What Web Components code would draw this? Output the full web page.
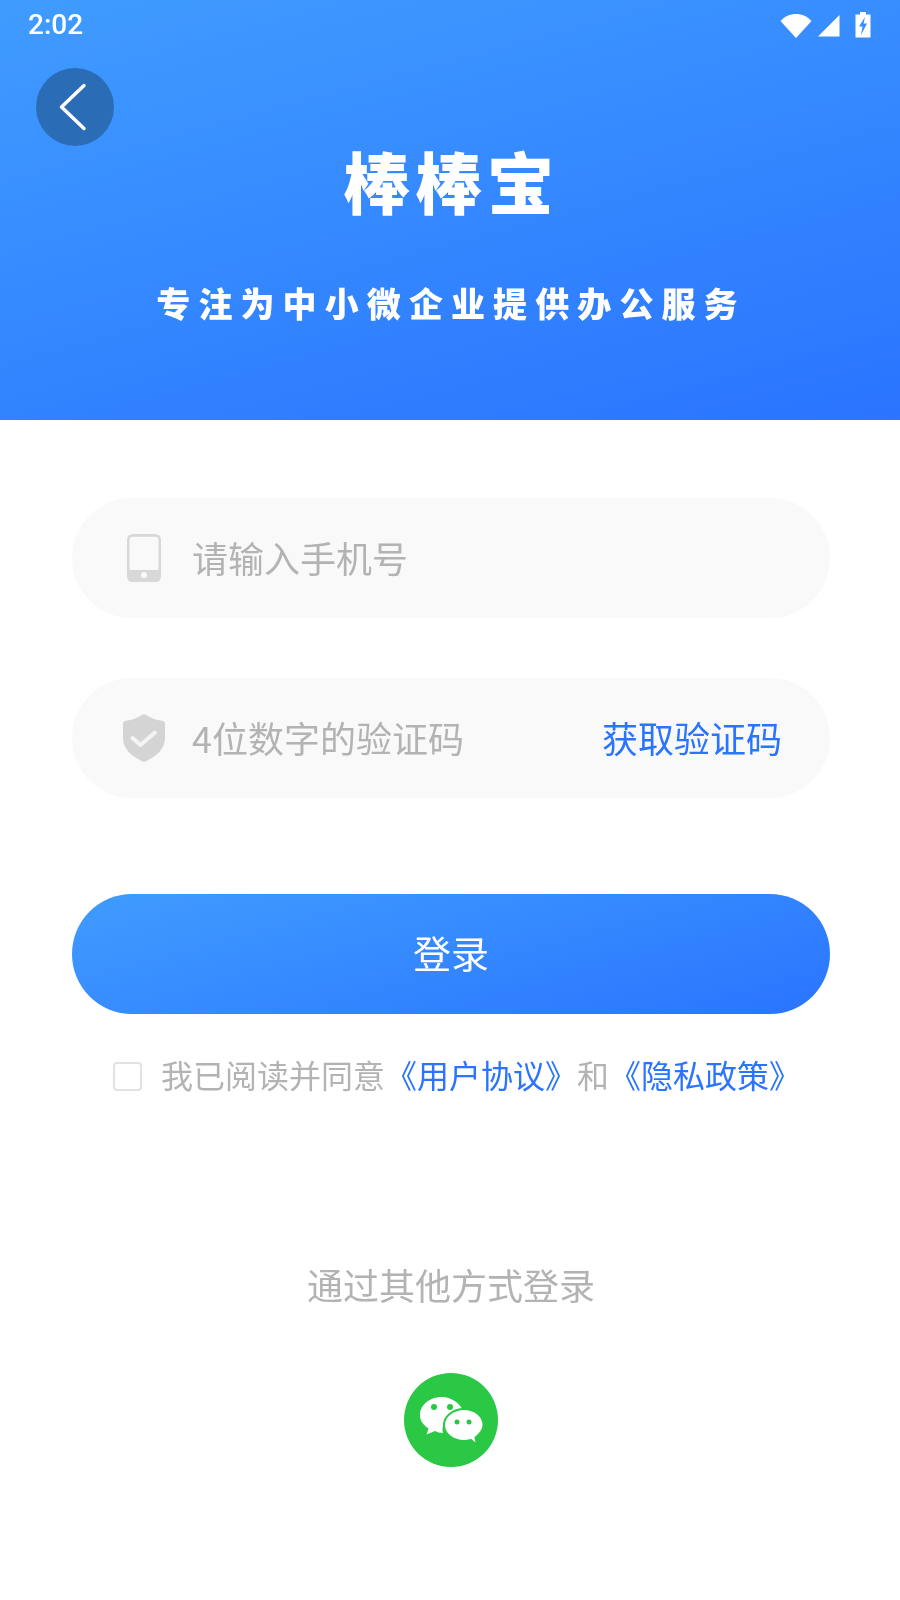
<!DOCTYPE html>
<html lang="zh">
<head>
<meta charset="utf-8">
<title>棒棒宝</title>
<style>
    html, body { margin: 0; background: #fff; }
    body { font-family: "Noto Sans CJK SC", "Noto Sans", sans-serif; }
</style>
</head>
<body>
<login-page></login-page>
<script>
const GRADIENT = 'linear-gradient(165deg, #409cff 0%, #2a74ff 100%)';

class StatusBar extends HTMLElement {
    constructor() {
        super();
        this.attachShadow({ mode: 'open' });
        this.shadowRoot.innerHTML = `
            <style>
            :host { display: flex; align-items: center; height: 50px; padding: 0 29px 0 28px; color: #fff; text-align: left; }
            .time { font: 500 28px/50px Roboto, sans-serif; flex: 1; }
            svg { display: block; fill: #fff; }
            .icons { display: flex; align-items: center; }
            </style>
            <span class="time">2:02</span>
            <div class="icons">
                <svg width="32" height="25" viewBox="0 0 32 25" style="margin-right:5px"><path d="M0.500 8C4.500 3.600 10 1 16 1S27.500 3.600 31.500 8L16 25Z"/></svg>
                <svg width="23" height="23" viewBox="0 0 23 23" style="margin-right:15px"><path d="M22.500 1V22.500H1Z"/></svg>
                <svg width="16" height="26" viewBox="0 0 16 26"><path fill-rule="evenodd" d="M5 0H11V2.500H15.500V25.500H.5V2.500H5ZM10 5L4 14.500H7.500L6 23L12 11.500H8.500Z"/></svg>
            </div>
        `;
    }
}

class BackButton extends HTMLElement {
    constructor() {
        super();
        this.attachShadow({ mode: 'open' });
        this.shadowRoot.innerHTML = `
            <style>
            :host { display: flex; align-items: center; justify-content: center; width: 78px; height: 78px; border-radius: 50%; background: #2b6cb6; }
            svg { display: block; }
            </style>
            <svg width="78" height="78" viewBox="0 0 78 78"><path d="M48 17.500L25.500 39L48 60.500" fill="none" stroke="#fff" stroke-width="3.500" stroke-linecap="round" stroke-linejoin="round"/></svg>
        `;
    }
}

class HeaderBanner extends HTMLElement {
    constructor() {
        super();
        this.attachShadow({ mode: 'open' });
        this.shadowRoot.innerHTML = `
            <style>
            :host { display: block; height: 420px; box-sizing: border-box; background: ${GRADIENT}; color: #fff; text-align: center; }
            back-button { margin: 18px 0 0 36px; }
            h1 { margin: -6px 0 0; font: 900 67px/80px "Noto Sans CJK SC", sans-serif; letter-spacing: 5px; padding-left: 2px; }
            p { margin: 58px 0 0; font: 900 34px/50px "Noto Sans CJK SC", sans-serif; letter-spacing: 8.100px; padding-left: 2px; }
            </style>
            <status-bar></status-bar>
            <back-button></back-button>
            <h1>棒棒宝</h1>
            <p>专注为中小微企业提供办公服务</p>
        `;
    }
}

class InputPill extends HTMLElement {
    constructor() {
        super();
        this.attachShadow({ mode: 'open' });
        this.shadowRoot.innerHTML = `
            <style>
            :host { display: flex; align-items: center; height: 120px; border-radius: 60px; background: #f9f9f9; color: #b3b3b3; font-size: 36px; line-height: 50px; padding: 0 48px 2px 50px; box-sizing: border-box; }
            .icon { display: flex; flex: none; padding-top: 2px; }
            .text { flex: 1; }
            ::slotted([slot=action]) { color: #2a74ff; }
            </style>
            <span class="icon"><slot name="icon"></slot></span>
            <span class="text"><slot></slot></span>
            <slot name="action"></slot>
        `;
    }
}

class SubmitButton extends HTMLElement {
    constructor() {
        super();
        this.attachShadow({ mode: 'open' });
        this.shadowRoot.innerHTML = `
            <style>
            :host { display: flex; align-items: center; justify-content: center; height: 120px; padding-bottom: 6px; box-sizing: border-box; border-radius: 60px; background: ${GRADIENT}; color: #fff; font-size: 38px; }
            </style>
            <slot></slot>
        `;
    }
}

class AgreementRow extends HTMLElement {
    constructor() {
        super();
        this.attachShadow({ mode: 'open' });
        this.shadowRoot.innerHTML = `
            <style>
            :host { display: flex; align-items: center; justify-content: center; padding-left: 12px; color: #b3b3b3; font-size: 32px; line-height: 46px; white-space: nowrap; }
            .box { flex: none; width: 25px; height: 25px; border: 2px solid #e2e2e2; border-radius: 4px; margin: 4px 19px 0 0; }
            ::slotted(a) { color: #2a74ff; text-decoration: none; }
            </style>
            <span class="box"></span>
            <span><slot></slot></span>
        `;
    }
}

class LoginPage extends HTMLElement {
    constructor() {
        super();
        this.attachShadow({ mode: 'open' });
        this.shadowRoot.innerHTML = `
            <style>
            :host { display: block; height: 1600px; overflow: hidden; will-change: transform; font-family: "Noto Sans CJK SC", "Noto Sans", sans-serif; }
            main { display: flex; flex-direction: column; padding: 78px 70px 0 72px; }
            .second { margin-top: 60px; }
            submit-button { margin-top: 96px; }
            agreement-row { margin-top: 37px; }
            .other { margin-top: 162px; text-align: center; color: #b3b3b3; font-size: 36px; line-height: 50px; }
            .wechat { display: block; margin: 64px auto 0; }
            </style>
            <header-banner></header-banner>
            <main>
                <input-pill>
                    <svg slot="icon" width="36" height="48" viewBox="0 0 36 48" style="margin:0 30px 0 4px"><path fill="#d8d8d8" fill-rule="evenodd" d="M7 0H29Q35 0 35 6V42Q35 48 29 48H7Q1 48 1 42V6Q1 0 7 0ZM3.500 6V34Q3.500 36 5.500 36H30.500Q32.500 36 32.500 34V6Q32.500 2.700 29.500 2.700H6.500Q3.500 2.700 3.500 6ZM18 38A3 3 0 1 0 18 44A3 3 0 1 0 18 38Z"/></svg>
                    请输入手机号
                </input-pill>
                <input-pill class="second">
                    <svg slot="icon" width="44" height="48" viewBox="0 0 44 48" style="margin:0 26px 0 0"><path fill="#d4d4d4" d="M20 1Q22 -0.300 24 1Q31 5.500 40 6.700Q43 7.200 43 10V24Q43 39 22 48Q1 39 1 24V10Q1 7.200 4 6.700Q13 5.500 20 1Z"/><path fill="none" stroke="#f4f4f4" stroke-width="4" stroke-linecap="round" stroke-linejoin="round" d="M10.500 24L18.500 31L33 18.500"/></svg>
                    4位数字的验证码
                    <span slot="action">获取验证码</span>
                </input-pill>
                <submit-button>登录</submit-button>
                <agreement-row>我已阅读并同意<a>《用户协议》</a>和<a>《隐私政策》</a></agreement-row>
                <div class="other">通过其他方式登录</div>
                <svg class="wechat" width="94" height="94" viewBox="0 0 94 94">
                    <circle cx="47" cy="47" r="47" fill="#2ac845"/>
                    <path fill="#fff" d="M38 24C25 24 16 32.500 16 42C16 48 19.500 52 24.500 55.500L22.500 61.500L31 58C33 59 36 60 39 60C37 50 44 40 59.500 39C57 31 48 24 38 24Z"/>
                    <path fill="#fff" stroke="#2ac845" stroke-width="2" d="M60 36C49 36 40 43.500 40 52C40 61 49 68 60 68C62.500 68 65 67.500 67 67L73 72L71.500 64.500C76 61 79.500 57 79.500 52C79.500 43.500 71 36 60 36Z"/>
                    <circle cx="30" cy="34" r="3" fill="#2ac845"/><circle cx="46" cy="34" r="3" fill="#2ac845"/>
                    <circle cx="53" cy="49" r="2.500" fill="#2ac845"/><circle cx="65" cy="49" r="2.500" fill="#2ac845"/>
                </svg>
            </main>
        `;
    }
}

customElements.define('status-bar', StatusBar);
customElements.define('back-button', BackButton);
customElements.define('header-banner', HeaderBanner);
customElements.define('input-pill', InputPill);
customElements.define('submit-button', SubmitButton);
customElements.define('agreement-row', AgreementRow);
customElements.define('login-page', LoginPage);
</script>
</body>
</html>
